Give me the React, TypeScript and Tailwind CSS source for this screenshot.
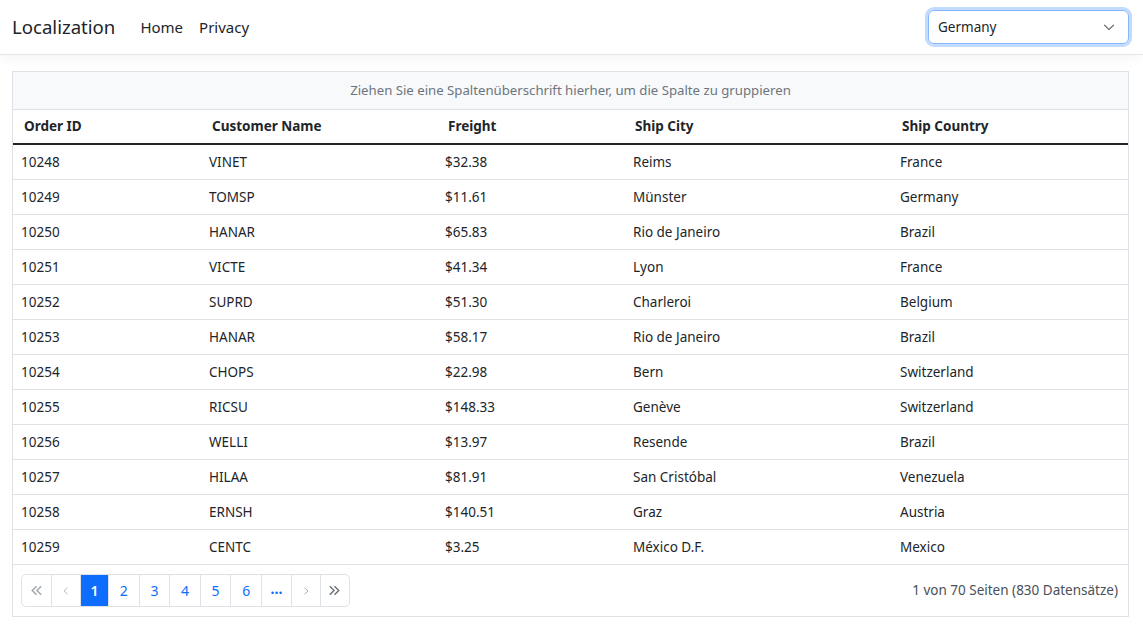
import React from 'react';

type Order = { id: number; customer: string; freight: string; city: string; country: string };

const orders: Order[] = [
    { id: 10248, customer: 'VINET', freight: '$32.38', city: 'Reims', country: 'France' },
    { id: 10249, customer: 'TOMSP', freight: '$11.61', city: 'Münster', country: 'Germany' },
    { id: 10250, customer: 'HANAR', freight: '$65.83', city: 'Rio de Janeiro', country: 'Brazil' },
    { id: 10251, customer: 'VICTE', freight: '$41.34', city: 'Lyon', country: 'France' },
    { id: 10252, customer: 'SUPRD', freight: '$51.30', city: 'Charleroi', country: 'Belgium' },
    { id: 10253, customer: 'HANAR', freight: '$58.17', city: 'Rio de Janeiro', country: 'Brazil' },
    { id: 10254, customer: 'CHOPS', freight: '$22.98', city: 'Bern', country: 'Switzerland' },
    { id: 10255, customer: 'RICSU', freight: '$148.33', city: 'Genève', country: 'Switzerland' },
    { id: 10256, customer: 'WELLI', freight: '$13.97', city: 'Resende', country: 'Brazil' },
    { id: 10257, customer: 'HILAA', freight: '$81.91', city: 'San Cristóbal', country: 'Venezuela' },
    { id: 10258, customer: 'ERNSH', freight: '$140.51', city: 'Graz', country: 'Austria' },
    { id: 10259, customer: 'CENTC', freight: '$3.25', city: 'México D.F.', country: 'Mexico' },
];

const cols = 'grid grid-cols-[188px_236px_188px_267px_1fr]';

const DoubleLeft = () => (
    <svg width="15" height="15" viewBox="0 0 16 16" fill="none" stroke="currentColor" strokeWidth="1.6">
        <path d="M8 3.5 3.5 8 8 12.5M13 3.5 8.5 8 13 12.5" />
    </svg>
);
const DoubleRight = () => (
    <svg width="15" height="15" viewBox="0 0 16 16" fill="none" stroke="currentColor" strokeWidth="1.6">
        <path d="M3 3.5 7.5 8 3 12.5M8 3.5 12.5 8 8 12.5" />
    </svg>
);
const Left = () => (
    <svg width="12" height="12" viewBox="0 0 16 16" fill="none" stroke="currentColor" strokeWidth="1.3">
        <path d="M10 3.5 5.5 8 10 12.5" />
    </svg>
);
const Right = () => (
    <svg width="12" height="12" viewBox="0 0 16 16" fill="none" stroke="currentColor" strokeWidth="1.3">
        <path d="M6 3.5 10.5 8 6 12.5" />
    </svg>
);

const Pager: React.FC = () => {
    const btn = 'h-full flex items-center justify-center border-l border-[#dee2e6] first:border-l-0';
    return (
        <div className="flex h-[33px] border border-[#dee2e6] rounded-[5px] overflow-hidden text-[14px]">
            <div className={`${btn} w-[29px] text-[#a3a8ad]`}><DoubleLeft /></div>
            <div className={`${btn} w-[29px] text-[#b5b9bd]`}><Left /></div>
            <div className={`${btn} w-[28px] bg-[#0d6efd] text-white font-semibold`}>1</div>
            {[2, 3, 4, 5, 6].map(n => (
                <div key={n} className={`${btn} w-[30.6px] text-[#0d6efd]`}>{n}</div>
            ))}
            <div className={`${btn} w-[30px] text-[#0d6efd] font-bold pb-[4px]`}>...</div>
            <div className={`${btn} w-[29px] text-[#a3a8ad]`}><Right /></div>
            <div className={`${btn} w-[29px] text-[#6c757d]`}><DoubleRight /></div>
        </div>
    );
};

export default function App() {
    return (
        <div className="min-h-screen bg-white text-[#212529] font-['Noto_Sans',sans-serif]">
            <nav className="h-[55px] border-b border-[#e5e5e5] shadow-[0_4px_12px_rgba(0,0,0,0.04)] flex items-center pl-[12px] pr-[14px]">
                <span className="text-[18.6px] text-[#212529] mr-[25px]">Localization</span>
                <span className="text-[15px] text-[#212529] mr-[16px]">Home</span>
                <span className="text-[15px] text-[#212529]">Privacy</span>
                <div className="ml-auto w-[201px] h-[34px] rounded-[6px] shadow-[0_0_0_3px_rgba(13,110,253,0.25)] border border-[#86b7fe] flex items-center pl-[9px] pr-[12px] text-[13.5px]">
                    <span>Germany</span>
                    <svg className="ml-auto text-[#555]" width="14" height="14" viewBox="0 0 16 16" fill="none" stroke="currentColor" strokeWidth="1.2">
                        <path d="M2.5 5.5 8 11l5.5-5.5" />
                    </svg>
                </div>
            </nav>

            <main className="pt-[16px] pl-[12px] pr-[14px]">
                <div className="border border-[#dee2e6] text-[13.5px]">
                    <div className="h-[38px] bg-[#f8f9fa] border-b border-[#dee2e6] flex items-center justify-center text-[#6c757d] text-[13.2px]">
                        Ziehen Sie eine Spaltenüberschrift hierher, um die Spalte zu gruppieren
                    </div>
                    <div className={`${cols} h-[35px] border-b-2 border-[#212529] font-bold items-center`}>
                        <div className="pl-[11px]">Order ID</div>
                        <div className="pl-[11px]">Customer Name</div>
                        <div className="pl-[11px]">Freight</div>
                        <div className="pl-[10px]">Ship City</div>
                        <div className="pl-[10px]">Ship Country</div>
                    </div>
                    {orders.map(o => (
                        <div key={o.id} className={`${cols} h-[35px] border-b border-[#dee2e6] items-center`}>
                            <div className="pl-[8px]">{o.id}</div>
                            <div className="pl-[8px]">{o.customer}</div>
                            <div className="pl-[8px]">{o.freight}</div>
                            <div className="pl-[8px]">{o.city}</div>
                            <div className="pl-[8px]">{o.country}</div>
                        </div>
                    ))}
                    <div className="h-[51px] flex items-center px-[8px]">
                        <Pager />
                        <span className="ml-auto pr-[2px] text-[#495057]">1 von 70 Seiten (830 Datensätze)</span>
                    </div>
                </div>
            </main>
        </div>
    );
}
